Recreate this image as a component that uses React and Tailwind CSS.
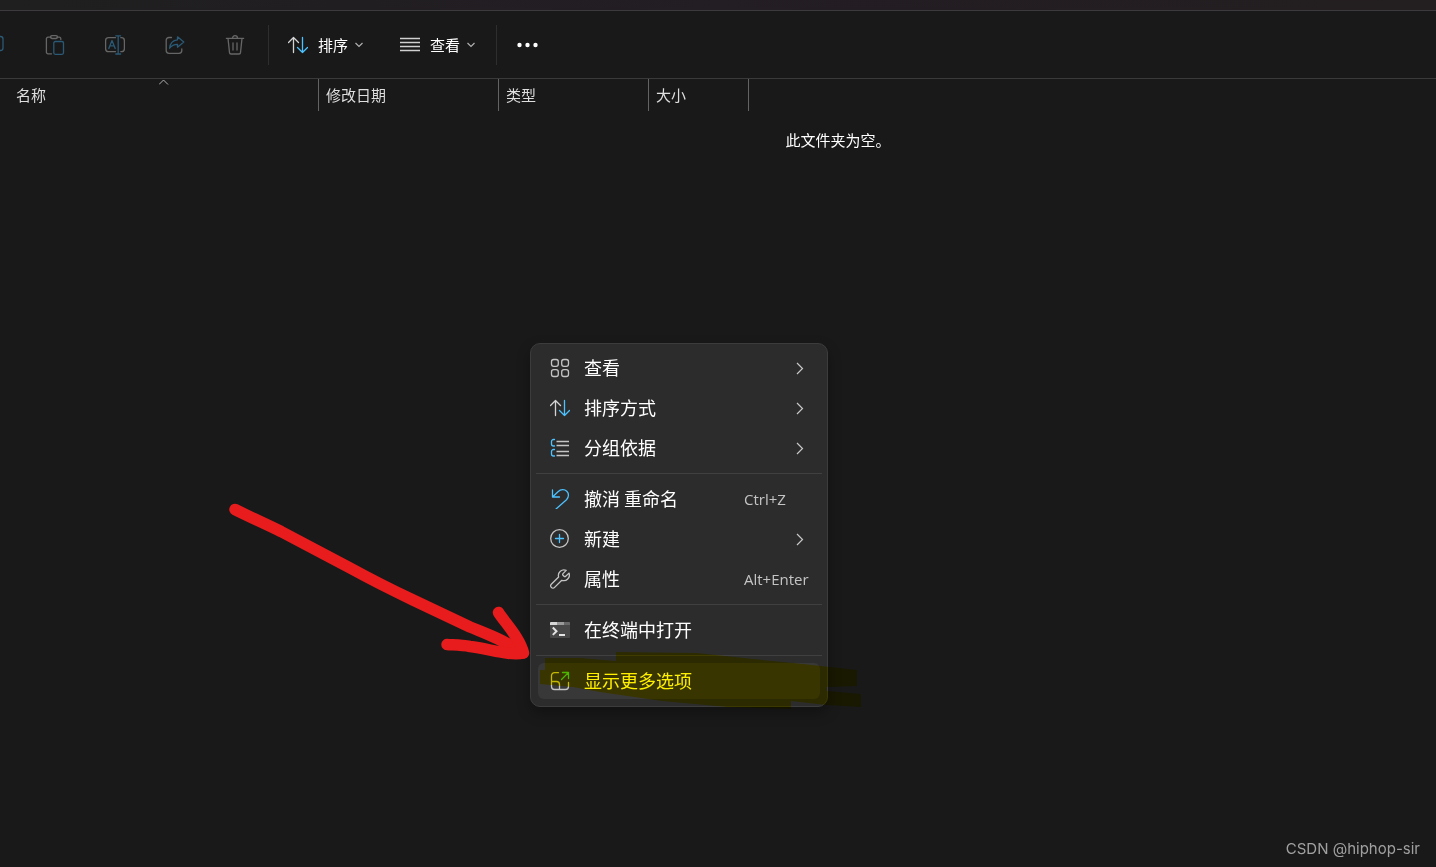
import { Fragment } from "react";

// Shared wrapper for the 20px outline icons
const Icon = ({ children }) => (
  <svg
    width="20"
    height="20"
    viewBox="0 0 20 20"
    fill="none"
    stroke="currentColor"
    strokeWidth="1.3"
    strokeLinecap="round"
    strokeLinejoin="round"
    className="shrink-0"
    aria-hidden="true"
  >
    {children}
  </svg>
);

const CopyIcon = () => (
  <Icon>
    <rect x="6" y="1.5" width="12" height="14" rx="2.5" stroke="#2a5a76" />
  </Icon>
);

const PasteIcon = () => (
  <Icon>
    <path d="M6 2.2H3A1.6 1.6 0 0 0 1.4 3.8V17.2A1.6 1.6 0 0 0 3 18.8H6.5M12 2.2h2.4A1.4 1.4 0 0 1 15.8 3.6V4.5" />
    <rect x="5.5" y="0.7" width="7" height="2.8" rx="1.4" />
    <rect x="8.8" y="6.5" width="9.7" height="12.8" rx="1.5" stroke="#2a5a76" />
  </Icon>
);

const RenameIcon = () => (
  <Icon>
    <path d="M10.5 2.7H3.6A3 3 0 0 0 .6 5.7v8a3 3 0 0 0 3 3h6.9M15.8 2.7h.6a3 3 0 0 1 3 3v8a3 3 0 0 1-3 3h-.6" />
    <path d="M3.8 13.5 7 5.5l3.2 8M5 10.8h4M13.2 1v17.8M10.8.8h4.8M10.8 19h4.8" stroke="#2a5a76" />
  </Icon>
);

const ShareIcon = () => (
  <Icon>
    <path d="M6.5 2.5H4A2.8 2.8 0 0 0 1.2 5.3V15.5a2.8 2.8 0 0 0 2.8 2.8h10a2.8 2.8 0 0 0 2.8-2.8v-1.5" />
    <path d="M12.5 1.8 18.8 7l-6.3 5.2V9.3C9 9.2 6.6 10.5 4.6 13.2 5 8.7 7.5 5.3 12.5 4.8z" stroke="#2a5a76" />
  </Icon>
);

const TrashIcon = () => (
  <Icon>
    <path d="M1.4 3.4h17.2M3 3.4l1.5 14.2a1.5 1.5 0 0 0 1.5 1.4h8a1.5 1.5 0 0 0 1.5-1.4L17 3.4M7.5 3.2a2.5 2.5 0 0 1 5 0M8 8v7M12 8v7" />
  </Icon>
);

const SortIcon = () => (
  <Icon>
    <path d="M5.5 17.5V2.5M.5 7.5l5-5 5 5" stroke="#d4d4d4" />
    <path d="M14.5 2.5v15M9.5 12.5l5 5 5-5" stroke="#4cc2ff" />
  </Icon>
);

const LinesIcon = () => (
  <Icon>
    <path d="M0 3.5h20M0 7.5h20M0 11.5h20M0 15.5h20" stroke="#d0d0d0" strokeLinecap="butt" />
  </Icon>
);

const GridIcon = () => (
  <Icon>
    <rect x="1.5" y="1.5" width="6.8" height="6.8" rx="2.2" />
    <rect x="11.7" y="1.5" width="6.8" height="6.8" rx="2.2" />
    <rect x="1.5" y="11.7" width="6.8" height="6.8" rx="2.2" />
    <rect x="11.7" y="11.7" width="6.8" height="6.8" rx="2.2" />
  </Icon>
);

const GroupIcon = () => (
  <Icon>
    <path d="M4.5 1.5H3.5A2 2 0 0 0 1.5 3.5v2.5a2 2 0 0 0 2 2h1M4.5 11.5h-1a2 2 0 0 0-2 2V16a2 2 0 0 0 2 2h1" stroke="#4cc2ff" />
    <path d="M6.5 3.5H19M6.5 7.5H19M6.5 13.5H19M6.5 17.5H19" strokeLinecap="butt" />
  </Icon>
);

const UndoIcon = () => (
  <Icon>
    <path d="M2.5 1v7h7M2.5 8 8 2.7c2.8-2.7 6.6-2.6 8.8-.4s2.3 5.8-.3 8.5L6 20" stroke="#4cc2ff" />
  </Icon>
);

const NewIcon = () => (
  <Icon>
    <circle cx="9.5" cy="9.5" r="8.8" />
    <path d="M9.5 5.5v8M5.5 9.5h8" stroke="#4cc2ff" />
  </Icon>
);

const WrenchIcon = () => (
  <Icon>
    <path d="M16.2 1.4a5.6 5.6 0 0 0-7.6 6.6L1.3 15.2a2.2 2.2 0 0 0 0 3.2 2.3 2.3 0 0 0 3.3 0l7.2-7.1a5.6 5.6 0 0 0 7.2-7.2l-3.3 3.2a1.2 1.2 0 0 1-1.7 0l-1-1a1.2 1.2 0 0 1 0-1.7z" />
  </Icon>
);

const TerminalIcon = () => (
  <Icon>
    <rect x="0" y="2" width="20" height="16" rx="1" fill="#484848" stroke="none" />
    <path d="M0 5V3a1 1 0 0 1 1-1h6v3z" fill="#d8d8d8" stroke="none" />
    <path d="M7 2h7v3H7z" fill="#9a9a9a" stroke="none" />
    <path d="M14 2h5a1 1 0 0 1 1 1v2h-6z" fill="#686868" stroke="none" />
    <path d="m2.8 7.5 3.7 3.7-3.7 3.7M9 15h6" stroke="#e4e4e4" strokeWidth="2" strokeLinecap="butt" strokeLinejoin="miter" />
  </Icon>
);

const MoreOptionsIcon = () => (
  <Icon>
    <path d="M8.5 1.7H4.5a3 3 0 0 0-3 3V15.5a3 3 0 0 0 3 3h11a3 3 0 0 0 3-3v-4M1.5 10.5h5a3 3 0 0 1 3 3v5" />
    <path d="M12.5 1.5h6v6M18.5 1.5l-7 7" stroke="#4cc2ff" />
  </Icon>
);

const ChevronDown = () => (
  <svg width="8" height="8" viewBox="0 0 8 8" fill="none" stroke="#b0b0b0" strokeWidth="1.2" aria-hidden="true">
    <path d="M.5 2 4 5.5 7.5 2" />
  </svg>
);

const ChevronRight = () => (
  <svg width="8" height="14" viewBox="0 0 8 14" fill="none" stroke="#c8c8c8" strokeWidth="1.2" aria-hidden="true">
    <path d="M1 2l5.5 5.5L1 13" />
  </svg>
);

const fileActions = [
  { label: "复制", icon: CopyIcon },
  { label: "粘贴", icon: PasteIcon },
  { label: "重命名", icon: RenameIcon },
  { label: "共享", icon: ShareIcon },
  { label: "删除", icon: TrashIcon },
];

const menuGroups = [
  [
    { label: "查看", icon: GridIcon, submenu: true },
    { label: "排序方式", icon: SortIcon, submenu: true },
    { label: "分组依据", icon: GroupIcon, submenu: true },
  ],
  [
    { label: "撤消 重命名", icon: UndoIcon, shortcut: "Ctrl+Z" },
    { label: "新建", icon: NewIcon, submenu: true },
    { label: "属性", icon: WrenchIcon, shortcut: "Alt+Enter" },
  ],
  [{ label: "在终端中打开", icon: TerminalIcon }],
  [{ label: "显示更多选项", icon: MoreOptionsIcon, active: true }],
];

const ToolbarDivider = () => <div className="mx-[3px] h-10 w-px bg-[#2e2e2e]" />;

const DropButton = ({ icon: Glyph, label }) => (
  <button className="flex h-10 items-center px-4 text-[15px] text-white">
    <Glyph />
    <span className="mr-[7px] ml-[10px]">{label}</span>
    <ChevronDown />
  </button>
);

const Toolbar = () => (
  <div className="flex h-[68px] items-center overflow-hidden border-b border-[#3a3a3a] pt-px">
    <div className="-ml-[35px] flex text-[#666]">
      {fileActions.map(({ label, icon: Glyph }) => (
        <button key={label} aria-label={label} className="flex h-10 w-[60px] items-center justify-center">
          <Glyph />
        </button>
      ))}
    </div>
    <ToolbarDivider />
    <div className="flex gap-[5px] pr-[2px]">
      <DropButton icon={SortIcon} label="排序" />
      <DropButton icon={LinesIcon} label="查看" />
    </div>
    <ToolbarDivider />
    <button aria-label="更多" className="flex h-10 items-center px-4">
      <svg width="22" height="6" viewBox="0 0 22 6" fill="#fff" aria-hidden="true">
        <circle cx="3.5" cy="3" r="2.2" />
        <circle cx="11.5" cy="3" r="2.2" />
        <circle cx="19.5" cy="3" r="2.2" />
      </svg>
    </button>
  </div>
);

const FileTable = () => (
  <table className="table-fixed border-separate border-spacing-0 text-left text-[15px] text-[#dedede]">
    <thead>
      <tr className="h-8">
        <th className="relative w-[319px] border-r border-[#636363] p-0 pl-4 font-normal">
          名称
          <svg
            className="absolute top-0 left-1/2"
            width="10"
            height="7"
            viewBox="0 0 10 7"
            fill="none"
            stroke="#b0b0b0"
            aria-hidden="true"
          >
            <path d="M0 5.5 4.5 1 9 5.5" />
          </svg>
        </th>
        <th className="w-[180px] border-r border-[#636363] p-0 pl-[7px] font-normal">修改日期</th>
        <th className="w-[150px] border-r border-[#636363] p-0 pl-[7px] font-normal">类型</th>
        <th className="w-[100px] border-r border-[#636363] p-0 pl-[7px] font-normal">大小</th>
      </tr>
    </thead>
  </table>
);

const ContextMenu = () => (
  <div
    role="menu"
    className="absolute top-[343px] left-[530px] w-[298px] rounded-[10px] border border-[#3c3c3c] bg-[#2c2c2c] px-1 pt-1 pb-[5px] shadow-[0_6px_14px_rgba(0,0,0,0.3)]"
  >
    {menuGroups.map((group, i) => (
      <Fragment key={i}>
        {i > 0 && <hr className="mx-px my-[5px] border-t border-[#404040]" />}
        {group.map(({ label, icon: Glyph, submenu, shortcut, active }) => (
          <div key={label} className="px-[3px] py-[2px]">
            <button
              role="menuitem"
              className={`flex h-9 w-full items-center rounded-md px-3 text-left text-[18px] text-[#c4c4c4] ${
                active ? "bg-[#383838]" : ""
              }`}
            >
              <Glyph />
              <span className="ml-[14px] grow pb-[2px] text-white">{label}</span>
              {shortcut && (
                <span className="w-16 font-['Open_Sans',sans-serif] text-[15px] whitespace-nowrap">{shortcut}</span>
              )}
              {submenu && (
                <span className="mr-1">
                  <ChevronRight />
                </span>
              )}
            </button>
          </div>
        ))}
      </Fragment>
    ))}
  </div>
);

// Hand drawn marks on top of the window
const Arrow = () => (
  <svg
    className="pointer-events-none absolute top-[490px] left-[220px]"
    width="320"
    height="180"
    viewBox="220 490 320 180"
    fill="none"
    stroke="#e81c1c"
    strokeWidth="11.5"
    strokeLinecap="round"
    strokeLinejoin="round"
    aria-hidden="true"
  >
    <path d="M235 509.5C250 517 268 525 281 531.5L352 569C372 580 392 590 413 600L470 627C487 634 502 639 523 653" />
    <path d="M498.5 612.5C506 624 520 638 523.5 653C510 656 490 649 470 646.5C462 645 455 645 447 644.5" />
  </svg>
);

const Highlight = () => (
  <svg
    className="pointer-events-none absolute top-[645px] left-[530px] mix-blend-multiply"
    width="340"
    height="70"
    viewBox="530 645 340 70"
    fill="#fff000"
    aria-hidden="true"
  >
    <path d="M545 658 580 658 616 661V652L697 653 753 659 803 664 857 670V686L827 687V691L861 694V707L827 705 791 701V709L728 707 662 701 600 692 573 687 540 684V670H545z" />
  </svg>
);

export default function App() {
  return (
    <div className="relative min-h-screen overflow-hidden bg-[#191919] font-['Noto_Sans_CJK_SC',sans-serif]">
      <div className="h-[11px] border-b border-[#3c3a3d] bg-linear-to-r from-[#1f1f1f] via-[#231d24] to-[#231e1f]" />
      <Toolbar />
      <main>
        <FileTable />
        <p className="mt-[18px] pl-[240px] text-center text-[15px] text-white">此文件夹为空。</p>
      </main>
      <ContextMenu />
      <Arrow />
      <Highlight />
      <footer className="absolute right-4 bottom-[7px] font-['Inter',sans-serif] text-[15px] text-[#a0a0a0]">
        CSDN @hiphop-sir
      </footer>
    </div>
  );
}
